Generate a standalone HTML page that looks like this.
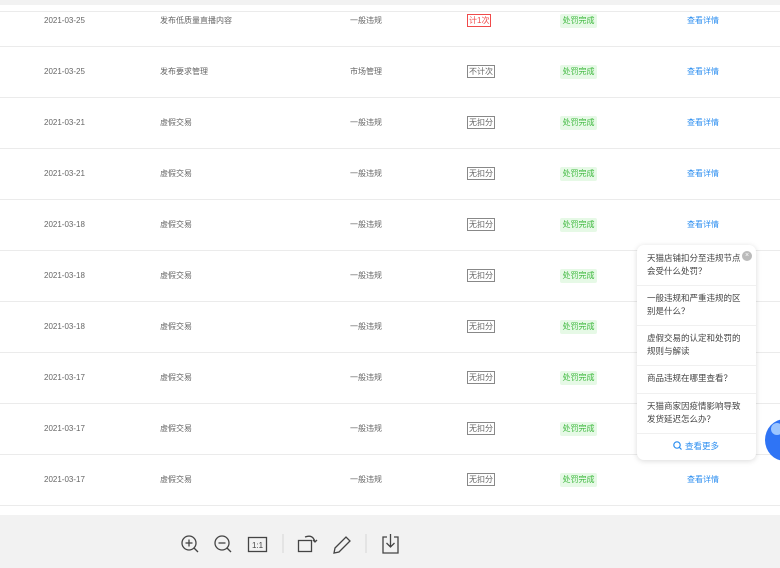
<!DOCTYPE html>
<html><head><meta charset="utf-8"><style>
*{margin:0;padding:0;box-sizing:border-box}
body{width:780px;height:568px;overflow:hidden;background:#fff;font-family:"Liberation Sans","Noto Sans CJK SC",sans-serif;font-size:8px;color:#666;position:relative}
.top{position:absolute;left:0;top:0;width:780px;height:5px;background:#f2f2f2}
.line{position:absolute;left:0;width:780px;height:1px;background:#ebebeb}
.t{position:absolute;line-height:10px;white-space:nowrap;margin-top:1px}
.tag{position:absolute;border:1px solid #888;height:13px;line-height:11px;padding:0 1px;font-size:8px;color:#666}
.tag.r{border-color:#f04a4a;color:#f04a4a}
.bd{position:absolute;background:#e6f9e6;color:#3cb83c;width:37px;height:14px;line-height:14px;text-align:center;border-radius:2px;font-size:8px}
.lk{position:absolute;color:#2b8ef0;font-size:8px;line-height:10px}
.bar{position:absolute;left:0;top:515px;width:780px;height:53px;background:#f2f2f2}
.pop{position:absolute;left:637px;top:245px;width:119px;height:215px;background:#fff;border-radius:7px;box-shadow:0 1px 6px rgba(0,0,0,.15)}
.q{position:absolute;left:10px;width:100px;font-size:8.5px;line-height:13px;color:#444}
.sep{position:absolute;left:0;width:119px;height:1px;background:#f0f0f0}
</style></head><body>
<div class="top"></div>
<div class="line" style="top:11px"></div>
<div class="line" style="top:46px"></div>
<div class="line" style="top:97px"></div>
<div class="line" style="top:148px"></div>
<div class="line" style="top:199px"></div>
<div class="line" style="top:250px"></div>
<div class="line" style="top:301px"></div>
<div class="line" style="top:352px"></div>
<div class="line" style="top:403px"></div>
<div class="line" style="top:454px"></div>
<div class="line" style="top:505px"></div>

<div class="t" style="left:44px;top:15px">2021-03-25</div><div class="t" style="left:160px;top:15px">发布低质量直播内容</div><div class="t" style="left:350px;top:15px">一般违规</div><div class="tag r" style="left:467px;top:14px">计1次</div><div class="bd" style="left:560px;top:14px">处罚完成</div><div class="lk" style="left:687px;top:16px">查看详情</div>

<div class="t" style="left:44px;top:66px">2021-03-25</div><div class="t" style="left:160px;top:66px">发布要求管理</div><div class="t" style="left:350px;top:66px">市场管理</div><div class="tag" style="left:467px;top:65px">不计次</div><div class="bd" style="left:560px;top:65px">处罚完成</div><div class="lk" style="left:687px;top:67px">查看详情</div>

<div class="t" style="left:44px;top:117px">2021-03-21</div><div class="t" style="left:160px;top:117px">虚假交易</div><div class="t" style="left:350px;top:117px">一般违规</div><div class="tag" style="left:467px;top:116px">无扣分</div><div class="bd" style="left:560px;top:116px">处罚完成</div><div class="lk" style="left:687px;top:118px">查看详情</div>

<div class="t" style="left:44px;top:168px">2021-03-21</div><div class="t" style="left:160px;top:168px">虚假交易</div><div class="t" style="left:350px;top:168px">一般违规</div><div class="tag" style="left:467px;top:167px">无扣分</div><div class="bd" style="left:560px;top:167px">处罚完成</div><div class="lk" style="left:687px;top:169px">查看详情</div>

<div class="t" style="left:44px;top:219px">2021-03-18</div><div class="t" style="left:160px;top:219px">虚假交易</div><div class="t" style="left:350px;top:219px">一般违规</div><div class="tag" style="left:467px;top:218px">无扣分</div><div class="bd" style="left:560px;top:218px">处罚完成</div><div class="lk" style="left:687px;top:220px">查看详情</div>

<div class="t" style="left:44px;top:270px">2021-03-18</div><div class="t" style="left:160px;top:270px">虚假交易</div><div class="t" style="left:350px;top:270px">一般违规</div><div class="tag" style="left:467px;top:269px">无扣分</div><div class="bd" style="left:560px;top:269px">处罚完成</div>

<div class="t" style="left:44px;top:321px">2021-03-18</div><div class="t" style="left:160px;top:321px">虚假交易</div><div class="t" style="left:350px;top:321px">一般违规</div><div class="tag" style="left:467px;top:320px">无扣分</div><div class="bd" style="left:560px;top:320px">处罚完成</div>

<div class="t" style="left:44px;top:372px">2021-03-17</div><div class="t" style="left:160px;top:372px">虚假交易</div><div class="t" style="left:350px;top:372px">一般违规</div><div class="tag" style="left:467px;top:371px">无扣分</div><div class="bd" style="left:560px;top:371px">处罚完成</div>

<div class="t" style="left:44px;top:423px">2021-03-17</div><div class="t" style="left:160px;top:423px">虚假交易</div><div class="t" style="left:350px;top:423px">一般违规</div><div class="tag" style="left:467px;top:422px">无扣分</div><div class="bd" style="left:560px;top:422px">处罚完成</div>

<div class="t" style="left:44px;top:474px">2021-03-17</div><div class="t" style="left:160px;top:474px">虚假交易</div><div class="t" style="left:350px;top:474px">一般违规</div><div class="tag" style="left:467px;top:473px">无扣分</div><div class="bd" style="left:560px;top:473px">处罚完成</div><div class="lk" style="left:687px;top:475px">查看详情</div>

<div class="bar">
<svg width="780" height="53" style="position:absolute;left:0;top:0" fill="none" stroke="#444" stroke-width="1.3">
<circle cx="189" cy="28" r="7"/><line x1="194" y1="33" x2="198" y2="37"/><line x1="185.5" y1="28" x2="192.5" y2="28"/><line x1="189" y1="24.5" x2="189" y2="31.5"/>
<circle cx="222" cy="28" r="7"/><line x1="227" y1="33" x2="231" y2="37"/><line x1="218.5" y1="28" x2="225.5" y2="28"/>
<rect x="248.5" y="22.5" width="18" height="14"/>
<text x="257.5" y="33" font-size="8" fill="#444" stroke="none" text-anchor="middle" font-family="Liberation Sans">1:1</text>
<line x1="283" y1="19" x2="283" y2="38" stroke="#ddd"/>
<rect x="298.5" y="25.5" width="13" height="11"/><path d="M305 22 q8-3 10 5"/><path d="M313 25 l2 2 l2-2"/>
<path d="M334 38 l1-5 l11-11 l4 4 l-11 11 z"/>
<line x1="366" y1="19" x2="366" y2="38" stroke="#ddd"/>
<path d="M387 22 h-4 v16 h15 v-16 h-4"/><path d="M390.5 19 v13 M386.5 28 l4 4 l4-4"/>
</svg>
</div>

<div style="position:absolute;left:765px;top:419px;width:40px;height:42px;border-radius:50%;background:#2f74f5"></div>
<div style="position:absolute;left:771px;top:423px;width:12px;height:12px;border-radius:50%;background:#9cc5ff"></div>

<div class="pop">
<div style="position:absolute;right:4px;top:6px;width:10px;height:10px;border-radius:50%;background:#bbb;color:#fff;font-size:7px;line-height:10px;text-align:center">×</div>
<div class="q" style="top:7px">天猫店铺扣分至违规节点会受什么处罚？</div>
<div class="sep" style="top:40px"></div>
<div class="q" style="top:47px">一般违规和严重违规的区别是什么？</div>
<div class="sep" style="top:80px"></div>
<div class="q" style="top:87px">虚假交易的认定和处罚的规则与解读</div>
<div class="sep" style="top:120px"></div>
<div class="q" style="top:127px">商品违规在哪里查看？</div>
<div class="sep" style="top:148px"></div>
<div class="q" style="top:155px">天猫商家因疫情影响导致发货延迟怎么办？</div>
<div class="sep" style="top:188px"></div>
<div style="position:absolute;left:36px;top:196px;color:#2b8ef0;font-size:8.5px;line-height:11px">
<svg width="9" height="9" style="vertical-align:-1px;margin-right:3px" fill="none" stroke="#2b8ef0" stroke-width="1.2"><circle cx="4" cy="4" r="3.2"/><line x1="6.3" y1="6.3" x2="8.5" y2="8.5"/></svg>查看更多</div>
</div>
</body></html>
